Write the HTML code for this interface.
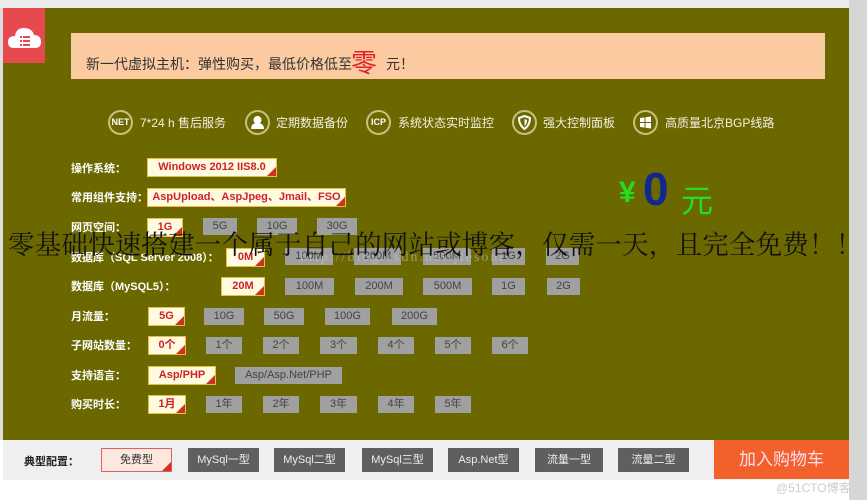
<!DOCTYPE html>
<html><head><meta charset="utf-8"><style>
*{margin:0;padding:0;box-sizing:border-box}
body{width:867px;height:500px;overflow:hidden;background:#fff;position:relative;font-family:"Liberation Sans","Noto Sans CJK SC",sans-serif}
.a{position:absolute}
.lbl{position:absolute;left:71px;color:#fff;font-size:11px;font-weight:bold;line-height:18px}
.sel{position:absolute;background:#fffbe0;border:1px solid #e8c040;color:#d0202a;font-weight:bold;font-size:11px;text-align:center;line-height:17px;height:19px}
.sel:after{content:"";position:absolute;right:0;bottom:0;width:0;height:0;border-left:9px solid transparent;border-bottom:9px solid #d03020}
.b{position:absolute;background:#a0a0a0;color:#444;font-size:11px;text-align:center;line-height:17px;height:17px}
.fi{position:absolute;top:110px;width:25px;height:25px;border:2px solid #c8c080;border-radius:50%;color:#fff;font-size:9px;font-weight:bold;text-align:center;line-height:21px}
.ft{position:absolute;top:114px;color:#f2f0e0;font-size:12px}
.bb{position:absolute;top:448px;height:24px;background:#5f5f5f;color:#eee;font-size:11px;text-align:center;line-height:24px}
</style></head><body>
<div class="a" style="left:0;top:0;width:867px;height:8px;background:#ececec"></div>
<div class="a" style="left:0;top:8px;width:3px;height:432px;background:#ddd"></div>
<div class="a" style="left:3px;top:8px;width:846px;height:432px;background:#6b6800"></div>
<div class="a" style="left:849px;top:0;width:18px;height:500px;background:#d6d6d6"></div>
<div class="a" style="left:3px;top:8px;width:42px;height:55px;background:#e64a4f"></div>
<svg class="a" style="left:8px;top:24px" width="34" height="26" viewBox="0 0 34 26"><path d="M6 24 Q0 24 0 18 Q0 12 7 12 Q8 4 16 4 Q24 4 26 11 Q33 11 33 18 Q33 24 27 24Z" fill="#fff"/><rect x="12" y="12" width="2" height="2" fill="#e64a4f"/><rect x="15" y="12" width="7" height="2" fill="#e64a4f"/><rect x="12" y="16" width="2" height="2" fill="#e64a4f"/><rect x="15" y="16" width="7" height="2" fill="#e64a4f"/><rect x="12" y="20" width="2" height="2" fill="#e64a4f"/><rect x="15" y="20" width="7" height="2" fill="#e64a4f"/></svg>
<div class="a" style="left:71px;top:33px;width:754px;height:46px;background:#fbcaa0"></div>
<div class="a" style="left:86px;top:54px;font-size:14px;color:#333">新一代虚拟主机：弹性购买，最低价格低至</div>
<div class="a" style="left:351px;top:43px;font-size:26px;color:#e0202a">零</div>
<div class="a" style="left:386px;top:54px;font-size:14px;color:#333">元！</div>

<div class="fi" style="left:108px">NET</div><div class="ft" style="left:140px">7*24 h 售后服务</div>
<div class="fi" style="left:245px"><svg width="21" height="21" viewBox="0 0 21 21"><circle cx="10.5" cy="8" r="4" fill="#fff"/><path d="M4 17 Q4 11 10.5 11 Q17 11 17 17Z" fill="#fff"/></svg></div><div class="ft" style="left:276px">定期数据备份</div>
<div class="fi" style="left:366px">ICP</div><div class="ft" style="left:398px">系统状态实时监控</div>
<div class="fi" style="left:512px"><svg width="21" height="21" viewBox="0 0 21 21"><path d="M10.5 4 L16 6 Q16 13 10.5 17 Q5 13 5 6Z" fill="none" stroke="#fff" stroke-width="2"/><path d="M10.5 7 L13 8 Q13 12 10.5 14Z" fill="#fff"/></svg></div><div class="ft" style="left:543px">强大控制面板</div>
<div class="fi" style="left:633px"><svg width="21" height="21" viewBox="0 0 21 21"><path d="M5 6 L9.5 5.4 V10 H5Z M10.5 5.2 L16 4.5 V10 H10.5Z M5 11 H9.5 V15.6 L5 15Z M10.5 11 H16 V16.5 L10.5 15.8Z" fill="#fff"/></svg></div><div class="ft" style="left:665px">高质量北京BGP线路</div>

<div class="a" style="left:619px;top:176px;font-size:30px;color:#22dd22;font-weight:bold">¥</div>
<div class="a" style="left:643px;top:164px;font-size:46px;color:#102890;font-weight:bold;line-height:50px">0</div>
<div class="a" style="left:681px;top:176px;font-size:32px;color:#22dd22">元</div>

<div class="lbl" style="top:160px">操作系统：</div><div class="sel" style="left:147px;top:158px;width:130px">Windows 2012 IIS8.0</div>
<div class="lbl" style="top:189px">常用组件支持：</div><div class="sel" style="left:147px;top:188px;width:199px">AspUpload、AspJpeg、Jmail、FSO</div>
<div class="lbl" style="top:219px">网页空间：</div><div class="sel" style="left:147px;top:218px;width:36px">1G</div>
<div class="b" style="left:203px;top:218px;width:34px">5G</div><div class="b" style="left:257px;top:218px;width:40px">10G</div><div class="b" style="left:317px;top:218px;width:40px">30G</div>

<div class="lbl" style="top:249px">数据库（SQL Server 2008）：</div><div class="sel" style="left:226px;top:248px;width:39px">0M</div>
<div class="b" style="left:285px;top:248px;width:48px">100M</div><div class="b" style="left:354px;top:248px;width:47px">200M</div><div class="b" style="left:423px;top:248px;width:48px">500M</div><div class="b" style="left:492px;top:248px;width:33px">1G</div><div class="b" style="left:546px;top:248px;width:33px">2G</div>
<div class="lbl" style="top:278px">数据库（MySQL5）：</div><div class="sel" style="left:221px;top:277px;width:44px">20M</div>
<div class="b" style="left:285px;top:278px;width:49px">100M</div><div class="b" style="left:355px;top:278px;width:48px">200M</div><div class="b" style="left:423px;top:278px;width:49px">500M</div><div class="b" style="left:492px;top:278px;width:33px">1G</div><div class="b" style="left:547px;top:278px;width:33px">2G</div>
<div class="lbl" style="top:308px">月流量：</div><div class="sel" style="left:148px;top:307px;width:37px">5G</div>
<div class="b" style="left:204px;top:308px;width:40px">10G</div><div class="b" style="left:264px;top:308px;width:40px">50G</div><div class="b" style="left:325px;top:308px;width:45px">100G</div><div class="b" style="left:392px;top:308px;width:45px">200G</div>
<div class="lbl" style="top:337px">子网站数量：</div><div class="sel" style="left:148px;top:336px;width:38px">0个</div>
<div class="b" style="left:206px;top:337px;width:36px">1个</div><div class="b" style="left:263px;top:337px;width:36px">2个</div><div class="b" style="left:320px;top:337px;width:37px">3个</div><div class="b" style="left:378px;top:337px;width:36px">4个</div><div class="b" style="left:435px;top:337px;width:36px">5个</div><div class="b" style="left:492px;top:337px;width:36px">6个</div>
<div class="lbl" style="top:367px">支持语言：</div><div class="sel" style="left:148px;top:366px;width:68px">Asp/PHP</div>
<div class="b" style="left:235px;top:367px;width:107px">Asp/Asp.Net/PHP</div>
<div class="lbl" style="top:396px">购买时长：</div><div class="sel" style="left:148px;top:395px;width:38px">1月</div>
<div class="b" style="left:206px;top:396px;width:36px">1年</div><div class="b" style="left:263px;top:396px;width:36px">2年</div><div class="b" style="left:320px;top:396px;width:37px">3年</div><div class="b" style="left:378px;top:396px;width:36px">4年</div><div class="b" style="left:435px;top:396px;width:36px">5年</div>

<div class="a" style="left:300px;top:250px;font-size:14px;color:rgba(200,200,200,0.55);font-family:'Liberation Serif',serif;letter-spacing:2px">http://blog.csdn.net/jiesoni</div>
<div class="a" style="left:8px;top:223px;font-size:26.5px;color:#111;font-family:'Liberation Serif','Noto Serif CJK SC',serif;white-space:nowrap;letter-spacing:0.2px">零基础快速搭建一个属于自己的网站或博客，仅需一天，且完全免费！！</div>

<div class="a" style="left:3px;top:440px;width:846px;height:40px;background:#efefef"></div>
<div class="a" style="left:24px;top:453px;font-size:11px;font-weight:bold;color:#222">典型配置：</div>
<div class="a" style="left:101px;top:448px;width:71px;height:24px;background:#fde8e0;border:1px solid #e06060;font-size:11px;text-align:center;line-height:22px;color:#333">免费型<span style="position:absolute;right:0;bottom:0;border-left:9px solid transparent;border-bottom:9px solid #d03020"></span></div>
<div class="bb" style="left:188px;width:71px">MySql一型</div>
<div class="bb" style="left:274px;width:71px">MySql二型</div>
<div class="bb" style="left:362px;width:71px">MySql三型</div>
<div class="bb" style="left:448px;width:71px">Asp.Net型</div>
<div class="bb" style="left:535px;width:68px">流量一型</div>
<div class="bb" style="left:618px;width:71px">流量二型</div>
<div class="a" style="left:714px;top:440px;width:135px;height:39px;background:#f2602c;color:#fde;font-size:17px;text-align:center;line-height:39px">加入购物车</div>
<div class="a" style="left:776px;top:479px;font-size:12px;color:#ccc">@51CTO博客</div>
</body></html>
